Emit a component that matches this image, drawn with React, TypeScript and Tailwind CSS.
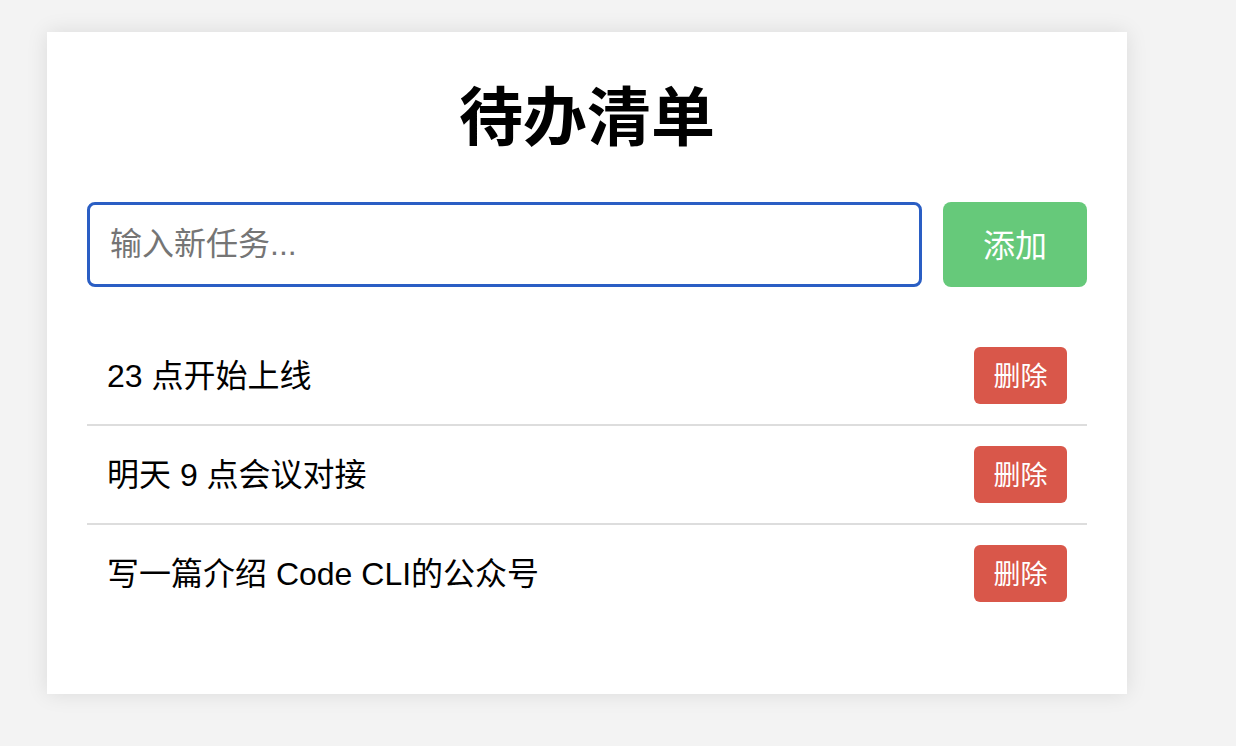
import { useState } from "react";

const FONT = "font-['Liberation_Sans','Noto_Sans_CJK_SC',sans-serif]";

const initialTodos = ["23 点开始上线", "明天 9 点会议对接", "写一篇介绍 Code CLI的公众号"];

export default function App() {
  const [todos, setTodos] = useState(initialTodos);
  const [value, setValue] = useState("");

  const add = () => {
    if (!value.trim()) return;
    setTodos([...todos, value.trim()]);
    setValue("");
  };

  return (
    <div className={`min-h-[746px] bg-[#f3f3f3] pt-[32px] pl-[47px] ${FONT}`}>
      <div className="w-[1080px] h-[662px] bg-white px-[40px] pt-[40px] shadow-[0_0_20px_rgba(0,0,0,0.1)]">
        <h1 className="mt-[8px] mb-[46px] h-[76px] text-center text-[64px] font-bold leading-[76px] text-black">
          待办清单
        </h1>
        <div className="flex gap-[21px]">
          <input
            value={value}
            onChange={(e) => setValue(e.target.value)}
            placeholder="输入新任务..."
            className="h-[85px] flex-1 rounded-[8px] border-[3px] border-[#2a5ec4] px-[20px] text-[32px] text-black outline-none placeholder:text-[#757575]"
          />
          <button
            onClick={add}
            className="h-[85px] w-[144px] rounded-[8px] bg-[#66c97a] pt-[2px] text-[32px] text-white"
          >
            添加
          </button>
        </div>
        <ul className="mt-[40px]">
          {todos.map((todo, i) => (
            <li
              key={i}
              className={`flex items-center justify-between px-[20px] py-[20px] ${
                i < todos.length - 1 ? "border-b-2 border-[#dddddd]" : ""
              }`}
            >
              <span className="text-[32px] leading-[40px] text-black">{todo}</span>
              <button
                onClick={() => setTodos(todos.filter((_, j) => j !== i))}
                className="h-[57px] w-[93px] rounded-[6px] bg-[#d9574a] pt-[3px] text-[27px] text-white"
              >
                删除
              </button>
            </li>
          ))}
        </ul>
      </div>
    </div>
  );
}
